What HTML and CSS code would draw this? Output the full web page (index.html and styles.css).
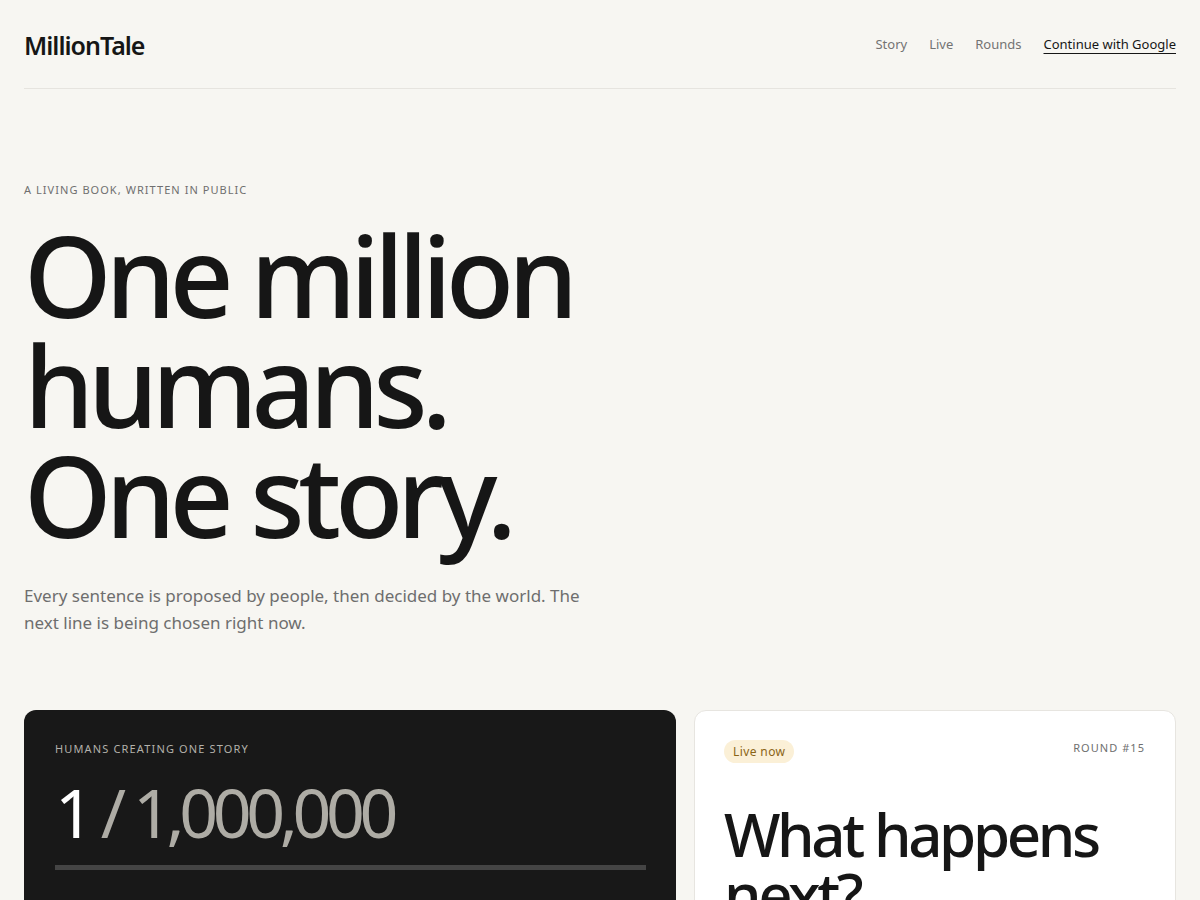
FILE: index.html
```html
<!DOCTYPE html>
<html lang="en">
<head>
<meta charset="utf-8">
<title>MillionTale</title>
<link rel="stylesheet" href="styles.css">
</head>
<body>
<div class="page">
  <header class="header">
    <div class="logo">MillionTale</div>
    <nav class="nav">
      <a class="nav-link" href="#">Story</a>
      <a class="nav-link" href="#">Live</a>
      <a class="nav-link" href="#">Rounds</a>
      <a class="nav-cta" href="#">Continue with Google</a>
    </nav>
  </header>

  <section class="hero">
    <div class="eyebrow">A living book, written in public</div>
    <h1 class="title">One million<br>humans.<br>One story.</h1>
    <p class="lede">Every sentence is proposed by people, then decided by the world. The next line is being chosen right now.</p>
  </section>

  <section class="cards">
    <div class="card card-dark">
      <div class="card-label">Humans creating one story</div>
      <div class="count"><span class="count-now">1</span><span class="count-total"> / 1,000,000</span></div>
      <div class="progress"><div class="progress-fill" style="width:0.0001%"></div></div>
    </div>
    <div class="card card-light">
      <div class="card-top">
        <span class="pill">Live now</span>
        <span class="round">Round #15</span>
      </div>
      <h2 class="question">What happens next?</h2>
    </div>
  </section>
</div>
</body>
</html>
```
FILE: styles.css
```css
* { box-sizing: border-box; }
html, body { margin: 0; padding: 0; }
body {
  background: #f7f6f2;
  color: #161616;
  font-family: "Noto Sans", "Open Sans", sans-serif;
}
.page {
  padding: 0 24px;
}
.header {
  height: 89px;
  display: flex;
  align-items: center;
  justify-content: space-between;
  border-bottom: 1px solid #e6e4df;
}
.logo {
  font-size: 25px;
  font-weight: 600;
  letter-spacing: -1px;
  color: #161616;
  margin-top: 1px;
}
.nav {
  display: flex;
  align-items: center;
  gap: 22px;
  font-size: 13px;
}
.nav-link {
  color: #737373;
  text-decoration: none;
}
.nav-cta {
  color: #161616;
  text-decoration: underline;
  text-underline-offset: 4px;
  text-decoration-thickness: 1px;
}
.hero {
  padding-top: 93px;
}
.eyebrow {
  font-size: 11px;
  letter-spacing: 1.05px;
  text-transform: uppercase;
  color: #6f6f6f;
  line-height: 16px;
}
.title {
  margin: 22px 0 0;
  font-size: 112px;
  font-weight: 500;
  line-height: 110px;
  letter-spacing: -6.3px;
  color: #161616;
}
.lede {
  margin: 32px 0 0;
  max-width: 580px;
  font-size: 17px;
  line-height: 27px;
  color: #6e6e6e;
}
.cards {
  margin-top: 74px;
  display: grid;
  grid-template-columns: 652px 1fr;
  gap: 18px;
}
.card {
  border-radius: 12px;
  padding: 30px;
  height: 260px;
}
.card-dark {
  background: #181818;
  padding: 31px 30px 30px 31px;
}
.card-label {
  font-size: 11px;
  letter-spacing: 1.15px;
  text-transform: uppercase;
  color: #b3b1aa;
  line-height: 16px;
}
.count {
  margin-top: 15px;
  font-size: 68px;
  line-height: 80px;
  letter-spacing: -5.4px;
}
.count-now { color: #ffffff; }
.count-total { color: #aeaca5; }
.progress {
  margin-top: 13px;
  height: 5px;
  background: #444444;
}
.progress-fill {
  height: 100%;
  background: #ffffff;
}
.card-light {
  background: #ffffff;
  border: 1px solid #e7e5e0;
  padding: 29px 30px 30px 29px;
}
.card-top {
  display: flex;
  justify-content: space-between;
  align-items: flex-start;
}
.pill {
  background: #fbf0d7;
  color: #8a6416;
  font-size: 12px;
  letter-spacing: 0.4px;
  padding: 3px 9px;
  border-radius: 999px;
  line-height: 17px;
}
.round {
  font-size: 11px;
  letter-spacing: 1.05px;
  text-transform: uppercase;
  color: #6f6f6f;
  line-height: 16px;
}
.question {
  margin: 41px 0 0;
  font-size: 60px;
  font-weight: 500;
  line-height: 60px;
  letter-spacing: -3.4px;
  color: #161616;
}
```
